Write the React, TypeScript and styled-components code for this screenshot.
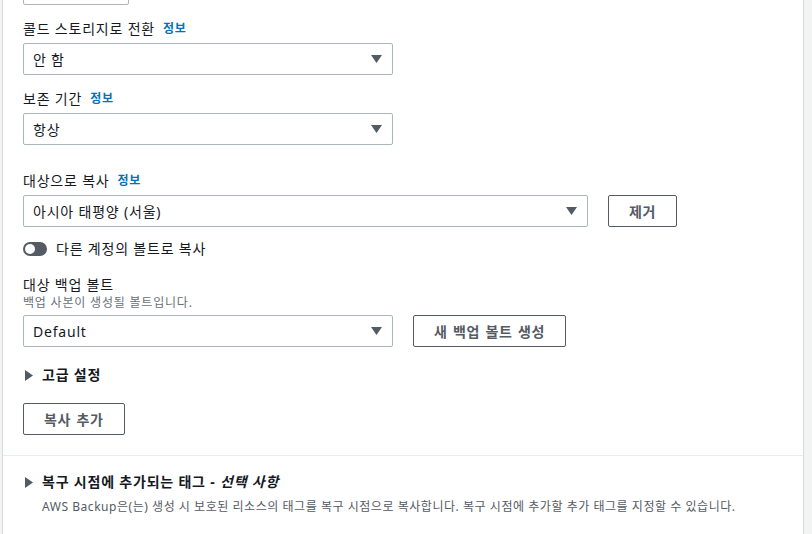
import React, { FC } from 'react';
import styled, { createGlobalStyle } from 'styled-components';

const GlobalStyle = createGlobalStyle`
  html, body {
    margin: 0;
    padding: 0;
    background: #f2f3f3;
    overflow: hidden;
  }
  body {
    font-family: 'Noto Sans', 'Noto Sans CJK KR', sans-serif;
    color: #16191f;
    letter-spacing: 0.05em;
  }
`;

const Page = styled.div`
  height: 534px;
  padding-left: 2px;
  padding-right: 8px;
  overflow: hidden;
`;

const Card = styled.div`
  display: flow-root;
  background: #fff;
  border-left: 1px solid #d5dbdb;
  border-right: 1px solid #d5dbdb;
  height: 100%;
`;

const Body = styled.div`
  padding: 0 20px 20px 20px;
  border-bottom: 1px solid #eaeded;
  display: flex;
  flex-direction: column;
  align-items: flex-start;
`;

const Stub = styled.div`
  width: 106px;
  height: 32px;
  margin-top: -27px;
  box-sizing: border-box;
  border: 1px solid #aab7b8;
  border-radius: 2px;
  margin-left: 20px;
`;

const Field = styled.div<{ $top: number }>`
  margin-top: ${({ $top }) => $top}px;
  display: flex;
  flex-direction: column;
`;

const Label = styled.div`
  font-size: 14px;
  line-height: 22px;
  margin-bottom: 3px;
  display: flex;
  align-items: center;
`;

const LabelTight = styled(Label)`
  line-height: 20px;
  margin-bottom: 0;
`;

const Description = styled.div`
  font-size: 12px;
  line-height: 16px;
  color: #687078;
  margin-bottom: 4px;
`;

const Info = styled.span`
  margin-left: 8px;
  font-size: 12px;
  font-weight: 700;
  color: #0073bb;
`;

const Row = styled.div`
  display: flex;
  align-items: center;
  gap: 20px;
`;

const SelectBox = styled.div<{ $width: number }>`
  width: ${({ $width }) => $width}px;
  height: 32px;
  box-sizing: border-box;
  border: 1px solid #aab7b8;
  border-radius: 2px;
  padding: 0 10px 0 9px;
  display: flex;
  align-items: center;
  justify-content: space-between;
  font-size: 14px;
`;

const Button = styled.button`
  height: 32px;
  box-sizing: border-box;
  padding: 0 20px;
  border: 1px solid #545b64;
  border-radius: 2px;
  background: #fff;
  color: #545b64;
  font-family: inherit;
  font-size: 14px;
  font-weight: 700;
  letter-spacing: 0.05em;
  word-spacing: 1px;
`;

const ToggleRow = styled.div`
  margin-top: 11px;
  display: flex;
  align-items: center;
  gap: 9px;
  font-size: 14px;
  line-height: 22px;
`;

const Toggle = styled.span`
  width: 24px;
  height: 14px;
  border-radius: 7px;
  background: #545b64;
  position: relative;
  &::after {
    content: '';
    position: absolute;
    left: 2px;
    top: 2px;
    width: 10px;
    height: 10px;
    border-radius: 50%;
    background: #fff;
  }
`;

const Expander = styled.div<{ $top: number }>`
  margin-top: ${({ $top }) => $top}px;
  display: flex;
  align-items: center;
  gap: 9px;
  font-size: 14px;
  font-weight: 700;
  line-height: 22px;
  padding-left: 2px;
`;

const Footer = styled.div`
  padding: 15px 20px 0 20px;
`;

const FooterDesc = styled.div`
  font-size: 12px;
  line-height: 16px;
  color: #545b64;
  margin-top: 6px;
  padding-left: 19px;
  letter-spacing: 0.045em;
`;

const Caret = () => (
  <svg width="11" height="8" viewBox="0 0 11 8">
    <path d="M0 0h11L5.5 8z" fill="#545b64" />
  </svg>
);

const RightCaret = () => (
  <svg width="8" height="11" viewBox="0 0 8 11">
    <path d="M0 0v11l8-5.5z" fill="#545b64" />
  </svg>
);

const Select: FC<{ value: string; width: number }> = ({ value, width }) => (
  <SelectBox $width={width}>
    <span>{value}</span>
    <Caret />
  </SelectBox>
);

export default function App() {
  return (
    <Page>
      <GlobalStyle />
      <Card>
        <Stub />
        <Body>
          <Field $top={13}>
            <Label>
              콜드 스토리지로 전환<Info>정보</Info>
            </Label>
            <Select value="안 함" width={370} />
          </Field>
          <Field $top={13}>
            <Label>
              보존 기간<Info>정보</Info>
            </Label>
            <Select value="항상" width={370} />
          </Field>
          <Field $top={25}>
            <Label>
              대상으로 복사<Info>정보</Info>
            </Label>
            <Row>
              <Select value="아시아 태평양 (서울)" width={565} />
              <Button>제거</Button>
            </Row>
          </Field>
          <ToggleRow>
            <Toggle />
            다른 계정의 볼트로 복사
          </ToggleRow>
          <Field $top={15}>
            <LabelTight>대상 백업 볼트</LabelTight>
            <Description>백업 사본이 생성될 볼트입니다.</Description>
            <Row>
              <Select value="Default" width={370} />
              <Button>새 백업 볼트 생성</Button>
            </Row>
          </Field>
          <Expander $top={17}>
            <RightCaret />
            고급 설정
          </Expander>
          <Field $top={17}>
            <Button>복사 추가</Button>
          </Field>
        </Body>
        <Footer>
          <Expander $top={0}>
            <RightCaret />
            <span>
              복구 시점에 추가되는 태그 - <i>선택 사항</i>
            </span>
          </Expander>
          <FooterDesc>
            AWS Backup은(는) 생성 시 보호된 리소스의 태그를 복구 시점으로 복사합니다. 복구 시점에 추가할 추가 태그를 지정할 수 있습니다.
          </FooterDesc>
        </Footer>
      </Card>
    </Page>
  );
}
